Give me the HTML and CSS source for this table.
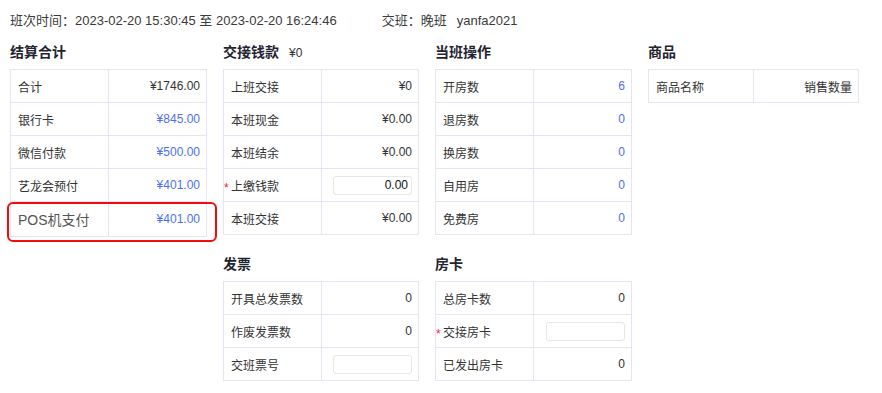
FILE: index.html
```html
<!DOCTYPE html>
<html lang="zh-CN">
<head>
<meta charset="utf-8">
<title>交班</title>
<link rel="stylesheet" href="styles.css">
</head>
<body>
<div class="page">
  <div class="header">
    <span>班次时间：2023-02-20 15:30:45 至 2023-02-20 16:24:46</span>
    <span class="shift">交班：晚班<span class="user">yanfa2021</span></span>
  </div>
  <div class="grid">
    <section class="sec c1">
      <h3 class="title">结算合计</h3>
      <div class="tbl-wrap">
        <table class="tbl">
          <tr><td>合计</td><td class="num">¥1746.00</td></tr>
          <tr><td>银行卡</td><td class="num blue">¥845.00</td></tr>
          <tr><td>微信付款</td><td class="num blue">¥500.00</td></tr>
          <tr><td>艺龙会预付</td><td class="num blue">¥401.00</td></tr>
          <tr class="pos"><td class="pos-label">POS机支付</td><td class="num blue">¥401.00</td></tr>
        </table>
        <div class="mark"></div>
      </div>
    </section>
    <section class="sec c2">
      <h3 class="title">交接钱款<span class="sub">¥0</span></h3>
      <table class="tbl">
        <tr><td>上班交接</td><td class="num">¥0</td></tr>
        <tr><td>本班现金</td><td class="num">¥0.00</td></tr>
        <tr><td>本班结余</td><td class="num">¥0.00</td></tr>
        <tr><td><span class="req">上缴钱款</span></td><td class="num"><input class="inp" value="0.00"></td></tr>
        <tr><td>本班交接</td><td class="num">¥0.00</td></tr>
      </table>
    </section>
    <section class="sec c3">
      <h3 class="title">当班操作</h3>
      <table class="tbl">
        <tr><td>开房数</td><td class="num blue">6</td></tr>
        <tr><td>退房数</td><td class="num blue">0</td></tr>
        <tr><td>换房数</td><td class="num blue">0</td></tr>
        <tr><td>自用房</td><td class="num blue">0</td></tr>
        <tr><td>免费房</td><td class="num blue">0</td></tr>
      </table>
    </section>
    <section class="sec c4">
      <h3 class="title">商品</h3>
      <table class="tbl">
        <tr><td>商品名称</td><td class="num">销售数量</td></tr>
      </table>
    </section>
    <section class="sec c2">
      <h3 class="title">发票</h3>
      <table class="tbl">
        <tr><td>开具总发票数</td><td class="num">0</td></tr>
        <tr><td>作废发票数</td><td class="num">0</td></tr>
        <tr><td>交班票号</td><td class="num"><input class="inp" value=""></td></tr>
      </table>
    </section>
    <section class="sec c3">
      <h3 class="title">房卡</h3>
      <table class="tbl">
        <tr><td>总房卡数</td><td class="num">0</td></tr>
        <tr><td><span class="req">交接房卡</span></td><td class="num"><input class="inp" value=""></td></tr>
        <tr><td>已发出房卡</td><td class="num">0</td></tr>
      </table>
    </section>
  </div>
</div>
</body>
</html>
```
FILE: styles.css
```css
* { box-sizing: border-box; }
html, body { margin: 0; padding: 0; background: #fff; }
body {
  font-family: "Liberation Sans", "Noto Sans CJK SC", sans-serif;
  font-size: 12px;
  color: #333;
}
.page { padding: 11px 10px 0 10px; }
.header {
  height: 20px;
  line-height: 20px;
  font-size: 13px;
  color: #3a3a3a;
  display: flex;
}
.shift { margin-left: 45px; }
.user { margin-left: 10px; }
.grid {
  display: grid;
  grid-template-columns: 197px 196px 197px 211px;
  column-gap: 16px;
  row-gap: 17px;
  margin-top: 11px;
  align-items: start;
}
.c1 { grid-column: 1; }
.c2 { grid-column: 2; }
.c3 { grid-column: 3; }
.c4 { grid-column: 4; }
.title {
  margin: 0 0 7px 0;
  height: 20px;
  line-height: 20px;
  font-size: 14px;
  font-weight: bold;
  color: #1f2430;
}
.sub {
  font-weight: normal;
  font-size: 12px;
  color: #333;
  margin-left: 10px;
}
.tbl-wrap { position: relative; }
.tbl {
  width: 100%;
  border-collapse: collapse;
  table-layout: fixed;
}
.tbl td {
  border: 1px solid #e3e5f6;
  height: 33px;
  padding: 0 6px 0 7px;
  width: 50%;
  white-space: nowrap;
  color: #333;
}
.tbl td.num { text-align: right; }
.tbl td.blue { color: #4d6ff0; }
.tbl tr.pos td { height: 35px; }
.tbl td.pos-label { font-size: 14px; color: #555; }
.mark {
  position: absolute;
  left: -3px;
  top: 133px;
  width: 210px;
  height: 40px;
  border: 2px solid #f40c0c;
  border-radius: 6px;
  pointer-events: none;
}
.req { position: relative; }
.req::before {
  content: "*";
  position: absolute;
  left: -7px;
  top: 1px;
  color: #f5222d;
  font-size: 12px;
}
.inp {
  width: 79px;
  height: 19px;
  border: 1px solid #e6e6e6;
  border-radius: 3px;
  font-family: "Liberation Sans", "Noto Sans CJK SC", sans-serif;
  font-size: 12px;
  color: #111;
  text-align: right;
  padding: 0 3px;
  vertical-align: middle;
  outline: none;
  background: #fff;
}
```
